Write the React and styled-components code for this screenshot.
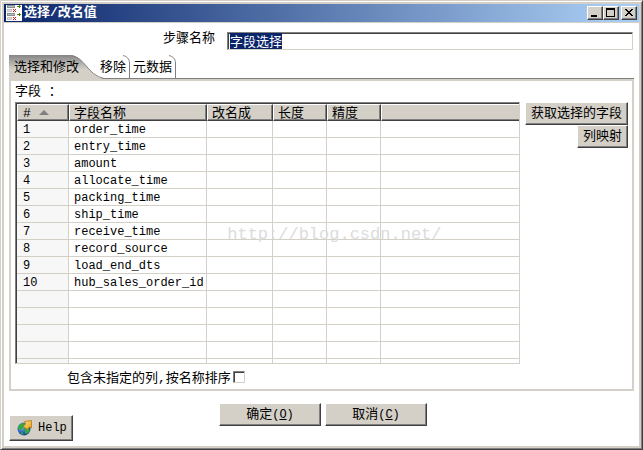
import React, { useEffect, useRef, useState } from "react";
import styled, { createGlobalStyle, css } from "styled-components";

const face = "#d4d0c8";
const shadow = "#808080";
const dark = "#404040";
const navy = "#0a246a";

const GlobalStyle = createGlobalStyle`
  *, *::before, *::after { box-sizing: border-box; }
  body {
    margin: 0;
    color: #000;
    font: 13px/16px "Liberation Mono", "Noto Sans CJK SC", monospace;
  }
  button, input { font: inherit; color: inherit; }
`;

const raised = css`
  background: ${face};
  border: 1px solid;
  border-color: #fff ${dark} ${dark} #fff;
  box-shadow: inset -1px -1px 0 ${shadow};
`;

const sunken = css`
  background: #fff;
  border: 1px solid;
  border-color: ${shadow} ${face} ${face} ${shadow};
  box-shadow: inset 1px 1px 0 ${dark};
`;

const Window = styled.main`
  display: flex;
  flex-direction: column;
  height: 100vh;
  padding: 3px;
  background: ${face};
  border: 1px solid;
  border-color: ${face} ${dark} ${dark} ${face};
  box-shadow: inset 1px 1px 0 #fff, inset -1px -1px 0 ${shadow};
`;

const TitleBar = styled.header`
  display: flex;
  align-items: center;
  flex: none;
  height: 18px;
  padding: 0 2px;
  color: #fff;
  background: linear-gradient(90deg, ${navy}, #a6caf0 95%);
`;

const Title = styled.h1`
  flex: 1;
  margin: 0 0 0 2px;
  font-size: 13px;
  line-height: 18px;
  font-weight: 700;
`;

const CaptionButton = styled.button`
  ${raised}
  display: grid;
  place-items: center;
  width: 16px;
  height: 14px;
  padding: 0;
  margin-left: ${(p) => (p.$apart ? "2px" : "0")};
`;

const Content = styled.div`
  display: flex;
  flex-direction: column;
  flex: 1;
  min-height: 0;
  margin-top: 1px;
  padding: 9px 5px 5px;
  background: #fff;
`;

const NameRow = styled.div`
  display: grid;
  grid-template-columns: 33% 1fr;
  column-gap: 12px;
  padding-right: 1px;
`;

const NameLabel = styled.label`
  text-align: right;
  line-height: 14px;
`;

const NameInput = styled.input`
  ${sunken}
  width: 100%;
  height: 18px;
  padding: 0 2px 2px;
  line-height: 14px;
  outline: none;
  border-radius: 0;
  caret-color: transparent;
  &::selection { background: ${navy}; color: #fff; }
`;

const TabStrip = styled.div`
  display: flex;
  height: 24px;
  margin-top: 5px;
`;

const Tab = styled.button`
  position: relative;
  padding: 2px 4px 0 3px;
  background: none;
  border: 0;
  border-bottom: 1px solid ${shadow};
  line-height: 21px;
`;

const ActiveTab = styled(Tab)`
  z-index: 1;
  padding: 2px 18px 0 5px;
  border-bottom-color: ${face};
`;

const TabLabel = styled.span`
  position: relative;
`;

const TabShape = styled.svg`
  position: absolute;
  top: 0;
  left: 0;
`;

const TabEdge = styled.svg`
  position: absolute;
  top: 0;
  right: 0;
`;

const StripRest = styled.div`
  flex: 1;
  border-bottom: 1px solid ${shadow};
`;

const Panel = styled.section`
  display: flex;
  flex-direction: column;
  flex: 1;
  min-height: 0;
  padding: 0 4px;
  border: 2px solid ${face};
`;

const FieldsHeading = styled.h2`
  margin: 0;
  font-size: 13px;
  line-height: 21px;
  font-weight: 400;
`;

const FieldsArea = styled.div`
  display: flex;
  flex: 1;
  min-height: 0;
  gap: 5px;
`;

const GridBox = styled.div`
  position: relative;
  flex: 1;
  min-width: 0;
  overflow: hidden;
  border: 1px solid;
  border-color: ${shadow} ${face} ${face} ${shadow};
`;

const GridInner = styled.div`
  height: 100%;
  overflow: hidden;
  border: solid ${dark};
  border-width: 1px 0 0 1px;
`;

const Grid = styled.table`
  width: 100%;
  table-layout: fixed;
  border-collapse: separate;
  border-spacing: 0;
`;

const Col = styled.col`
  width: ${(p) => p.$width};
`;

const HeadCell = styled.th`
  ${raised}
  height: 17px;
  padding: 2px 5px 0 4px;
  line-height: 13px;
  font-weight: 400;
  text-align: left;
  white-space: nowrap;
  &:first-child { padding-left: 5px; }
  &:last-child { border-right: 0; box-shadow: inset 0 -1px 0 ${shadow}; }
`;

const SortMark = styled.svg`
  margin-left: 8px;
  vertical-align: 2px;
`;

const Cell = styled.td`
  height: 17px;
  padding: 2px 5px 0;
  font-size: 12px;
  line-height: 14px;
  white-space: nowrap;
  border: solid ${face};
  border-width: 0 1px 1px 0;
  &:first-child { padding-left: 6px; background: #f7f7f7; }
  &:last-child { border-right: 0; }
`;

const Watermark = styled.span`
  position: absolute;
  left: 42%;
  top: 47%;
  font-size: 17px;
  line-height: 20px;
  color: #dcdcdc;
  pointer-events: none;
`;

const SideButtons = styled.div`
  display: flex;
  flex-direction: column;
  align-items: flex-end;
`;

const PushButton = styled.button`
  ${raised}
  display: inline-flex;
  align-items: center;
  justify-content: center;
  min-width: ${(p) => (p.$wide ? "102px" : "0")};
  height: 23px;
  padding: 0 5px;
  white-space: nowrap;
`;

const HelpButton = styled(PushButton)`
  gap: 5px;
  height: 26px;
  padding: 0 5px 0 7px;
  font-size: 12px;
`;

const OptionRow = styled.div`
  display: flex;
  align-items: center;
  gap: 2px;
  height: 25px;
  padding-left: 52px;
`;

const OptionLabel = styled.label`
  padding-top: 4px;
`;

const CheckBox = styled.input`
  ${sunken}
  appearance: none;
  width: 12px;
  height: 12px;
  margin: 0;
  &:checked { background: ${shadow}; }
`;

const Footer = styled.footer`
  display: grid;
  grid-template-columns: 1fr auto 1fr;
  margin-top: 12px;
  height: 38px;
`;

const HelpSlot = styled.div`
  align-self: end;
  display: flex;
`;

const Actions = styled.div`
  display: flex;
  align-items: flex-start;
  gap: 4px;
  padding-left: 3px;
`;

const Mnemonic = styled.span`
  font-size: 12px;
`;

const ButtonText = styled.span``;

const fields = [
  "order_time",
  "entry_time",
  "amount",
  "allocate_time",
  "packing_time",
  "ship_time",
  "receive_time",
  "record_source",
  "load_end_dts",
  "hub_sales_order_id",
  "",
  "",
  "",
  "",
  "",
];

const widths = ["52px", "138px", "66px", "54px", "54px", "auto"];
const heads = ["字段名称", "改名成", "长度", "精度", ""];

function StepIcon() {
  return (
    <svg width="16" height="16" viewBox="0 0 16 16" shapeRendering="crispEdges" aria-hidden="true">
      <rect width="16" height="16" fill="#fff" />
      <path d="M1 0h8v3H1zM1 8h8v3H1z" fill="#8b8e92" />
      <path d="M2 1h6v1H2zM2 9h6v1H2z" fill="#b9bbbe" />
      <path d="M1 4h5v3H1zM1 12h5v3H1z" fill="#c4c5c7" />
      <path d="M2 5h3v1H2zM2 13h3v1H2z" fill="#dddee0" />
      <path d="M11 1h4v1h-4zM13 0h1v3h-1zM11 9h4v1h-4zM13 8h1v3h-1z" fill="#4c7a14" />
      <path
        d="M7 4h1v1H7zM9 4h1v1H9zM8 5h1v1H8zM7 6h1v1H7zM9 6h1v1H9zM7 12h1v1H7zM9 12h1v1H9zM8 13h1v1H8zM7 14h1v1H7zM9 14h1v1H9z"
        fill="#d21d1d"
      />
    </svg>
  );
}

function GlobeIcon() {
  return (
    <svg width="16" height="16" viewBox="0 0 16 16" aria-hidden="true">
      <defs>
        <radialGradient id="sea" cx="35%" cy="35%" r="70%">
          <stop offset="0" stopColor="#7fb2ea" />
          <stop offset="0.6" stopColor="#2c62bd" />
          <stop offset="1" stopColor="#173f8f" />
        </radialGradient>
        <linearGradient id="gold" x1="0" y1="0" x2="1" y2="1">
          <stop offset="0" stopColor="#ffe28a" />
          <stop offset="1" stopColor="#e39a12" />
        </linearGradient>
      </defs>
      <circle cx="7" cy="9" r="6.5" fill="url(#sea)" />
      <path d="M2 5l3-2 3 1-1 3-2 2-2 1-2-2zM8 8l4 1 1 2-3 3-2-1 0-2-2-2zM4 12l2 1v2l-2-1z" fill="#36a83c" />
      <path d="M7.500 1.500l7-1v7.500l-2-1-2 2.500-4-3 2-2.500z" fill="url(#gold)" stroke="#b87a10" strokeWidth="0.8" />
    </svg>
  );
}

function Edge() {
  return (
    <TabEdge width="8" height="24" aria-hidden="true">
      <path d="M1 .5C5 1.500 7.500 4 7.500 8V24" fill="none" stroke={shadow} />
    </TabEdge>
  );
}

export default function App() {
  const nameRef = useRef(null);
  const [name, setName] = useState("字段选择");
  const [include, setInclude] = useState(false);

  useEffect(() => {
    nameRef.current.focus();
    nameRef.current.select();
  }, []);

  return (
    <>
      <GlobalStyle />
      <Window>
        <TitleBar>
          <StepIcon />
          <Title>选择/改名值</Title>
          <CaptionButton type="button" aria-label="最小化">
            <svg width="12" height="10" shapeRendering="crispEdges"><path d="M2 7h6v2H2z" /></svg>
          </CaptionButton>
          <CaptionButton type="button" aria-label="最大化">
            <svg width="12" height="10" shapeRendering="crispEdges">
              <path d="M1 0h9v9H1zM2 2v6h7V2z" fillRule="evenodd" />
            </svg>
          </CaptionButton>
          <CaptionButton type="button" aria-label="关闭" $apart>
            <svg width="12" height="10" shapeRendering="crispEdges">
              <path d="M2 1h2v1h1v1h2V2h1V1h2v1H9v1H8v1H7v1h1v1h1v1h1v1H8V7H7V6H5v1H4v1H2V7h1V6h1V5h1V4H4V3H3V2H2z" />
            </svg>
          </CaptionButton>
        </TitleBar>

        <Content>
          <NameRow>
            <NameLabel htmlFor="step-name">步骤名称</NameLabel>
            <NameInput id="step-name" ref={nameRef} value={name} onChange={(e) => setName(e.target.value)} />
          </NameRow>

          <TabStrip role="tablist">
            <ActiveTab type="button" role="tab" aria-selected="true">
              <TabShape width="98" height="24" aria-hidden="true">
                <defs>
                  <linearGradient id="tab-fill" x1="0" y1="0" x2="0" y2="1">
                    <stop offset="0" stopColor="#858585" />
                    <stop offset="0.6" stopColor={face} />
                    <stop offset="1" stopColor={face} />
                  </linearGradient>
                </defs>
                <path d="M0 0H62C76 2 78 20 95 24H0z" fill="url(#tab-fill)" />
                <path d="M62 .5C76 2 78 20 95 23.500H98" fill="none" stroke={shadow} />
              </TabShape>
              <TabLabel>选择和修改</TabLabel>
            </ActiveTab>
            <Tab type="button" role="tab" aria-selected="false">
              移除
              <Edge />
            </Tab>
            <Tab type="button" role="tab" aria-selected="false">
              元数据
              <Edge />
            </Tab>
            <StripRest />
          </TabStrip>

          <Panel role="tabpanel">
            <FieldsHeading>字段 ：</FieldsHeading>
            <FieldsArea>
              <GridBox>
                <GridInner>
                  <Grid>
                    <colgroup>
                      {widths.map((w, i) => (
                        <Col key={i} $width={w} />
                      ))}
                    </colgroup>
                    <thead>
                      <tr>
                        <HeadCell scope="col">
                          #
                          <SortMark width="10" height="5" viewBox="0 0 10 5" aria-hidden="true">
                            <path d="M0 5L5 0l5 5z" fill={shadow} />
                          </SortMark>
                        </HeadCell>
                        {heads.map((h, i) => (
                          <HeadCell key={i} scope="col">{h}</HeadCell>
                        ))}
                      </tr>
                    </thead>
                    <tbody>
                      {fields.map((field, i) => (
                        <tr key={i}>
                          <Cell>{field && i + 1}</Cell>
                          <Cell>{field}</Cell>
                          <Cell />
                          <Cell />
                          <Cell />
                          <Cell />
                        </tr>
                      ))}
                    </tbody>
                  </Grid>
                </GridInner>
                <Watermark>http://blog.csdn.net/</Watermark>
              </GridBox>
              <SideButtons>
                <PushButton type="button">获取选择的字段</PushButton>
                <PushButton type="button">列映射</PushButton>
              </SideButtons>
            </FieldsArea>
            <OptionRow>
              <OptionLabel htmlFor="include-rest">包含未指定的列,按名称排序</OptionLabel>
              <CheckBox
                id="include-rest"
                type="checkbox"
                checked={include}
                onChange={(e) => setInclude(e.target.checked)}
              />
            </OptionRow>
          </Panel>

          <Footer>
            <HelpSlot>
              <HelpButton type="button">
                <GlobeIcon />
                Help
              </HelpButton>
            </HelpSlot>
            <Actions>
              <PushButton type="button" $wide>
                <ButtonText>确定<Mnemonic>(<u>O</u>)</Mnemonic></ButtonText>
              </PushButton>
              <PushButton type="button" $wide>
                <ButtonText>取消<Mnemonic>(<u>C</u>)</Mnemonic></ButtonText>
              </PushButton>
            </Actions>
          </Footer>
        </Content>
      </Window>
    </>
  );
}
